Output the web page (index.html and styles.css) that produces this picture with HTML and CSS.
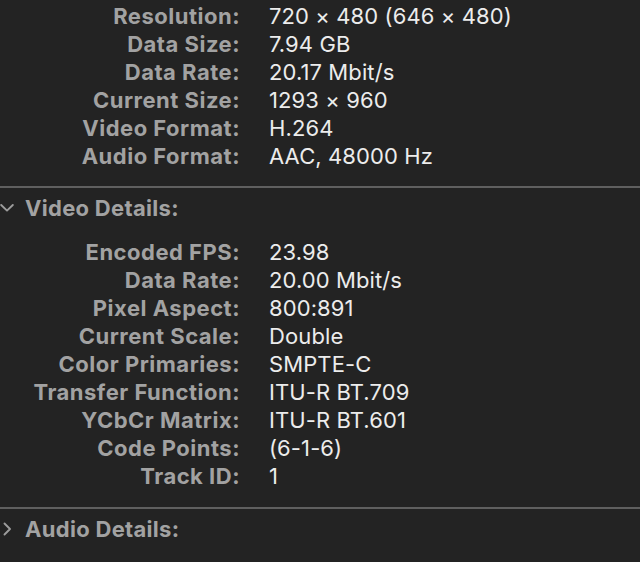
FILE: index.html
```html
<!DOCTYPE html>
<html lang="en">
<head>
    <meta charset="UTF-8">
    <title>Movie Inspector</title>
    <link rel="stylesheet" href="styles.css">
</head>
<body>
    <div class="inspector">
        <section class="info-list">
            <div class="info-row"><span class="info-label">Resolution:</span><span class="info-value">720 × 480 (646 × 480)</span></div>
            <div class="info-row"><span class="info-label">Data Size:</span><span class="info-value">7.94 GB</span></div>
            <div class="info-row"><span class="info-label">Data Rate:</span><span class="info-value">20.17 Mbit/s</span></div>
            <div class="info-row"><span class="info-label">Current Size:</span><span class="info-value">1293 × 960</span></div>
            <div class="info-row"><span class="info-label">Video Format:</span><span class="info-value">H.264</span></div>
            <div class="info-row"><span class="info-label">Audio Format:</span><span class="info-value">AAC, 48000 Hz</span></div>
        </section>

        <div class="section-header">
            <svg class="chevron" width="14" height="14" viewBox="0 0 14 14"><path d="M1.2 4 L7 9.6 L12.8 4" fill="none" stroke="#9c9c9c" stroke-width="1.9" stroke-linecap="round" stroke-linejoin="round"/></svg>
            <span class="section-title">Video Details:</span>
        </div>

        <section class="info-list details">
            <div class="info-row"><span class="info-label">Encoded FPS:</span><span class="info-value">23.98</span></div>
            <div class="info-row"><span class="info-label">Data Rate:</span><span class="info-value">20.00 Mbit/s</span></div>
            <div class="info-row"><span class="info-label">Pixel Aspect:</span><span class="info-value">800:891</span></div>
            <div class="info-row"><span class="info-label">Current Scale:</span><span class="info-value">Double</span></div>
            <div class="info-row"><span class="info-label">Color Primaries:</span><span class="info-value">SMPTE-C</span></div>
            <div class="info-row"><span class="info-label">Transfer Function:</span><span class="info-value">ITU-R BT.709</span></div>
            <div class="info-row"><span class="info-label">YCbCr Matrix:</span><span class="info-value">ITU-R BT.601</span></div>
            <div class="info-row"><span class="info-label">Code Points:</span><span class="info-value">(6-1-6)</span></div>
            <div class="info-row"><span class="info-label">Track ID:</span><span class="info-value">1</span></div>
        </section>

        <div class="section-header">
            <svg class="chevron" width="14" height="14" viewBox="0 0 14 14"><path d="M4.5 1.5 L10 7 L4.5 12.5" fill="none" stroke="#9c9c9c" stroke-width="1.9" stroke-linecap="round" stroke-linejoin="round"/></svg>
            <span class="section-title">Audio Details:</span>
        </div>
    </div>
</body>
</html>
```

FILE: styles.css
```css
body {
    margin: 0;
    background: #232323;
    font-family: Inter, 'Noto Sans', sans-serif;
    font-size: 22px;
    overflow: hidden;
}

.inspector {
    width: 640px;
}

.info-list {
    padding: 2px 0 16px;
}

.info-list.details {
    padding: 10px 0 17px;
}

.info-row {
    display: grid;
    grid-template-columns: 240px 1fr;
    column-gap: 29px;
    height: 28px;
    line-height: 28px;
}

.info-label {
    text-align: right;
    font-weight: 700;
    letter-spacing: 0.5px;
    color: #a2a2a2;
}

.info-value {
    color: #ececec;
    letter-spacing: 0.1px;
}

.section-header {
    display: flex;
    align-items: center;
    gap: 11px;
    height: 40px;
    border-top: 2px solid #5f5f5f;
}

.section-title {
    font-weight: 700;
    letter-spacing: 0.3px;
    color: #a2a2a2;
}
```
